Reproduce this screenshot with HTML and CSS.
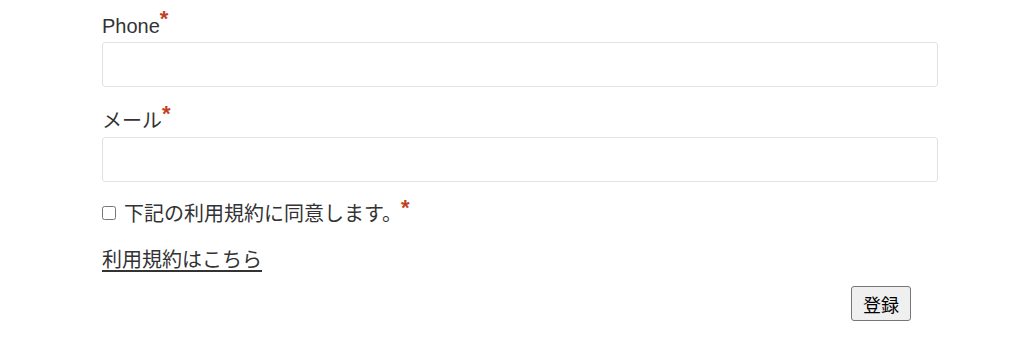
FILE: index.html
```html
<!DOCTYPE html>
<html lang="ja">
<head>
<meta charset="utf-8">
<link rel="stylesheet" href="styles.css">
</head>
<body>
<form class="form">
  <div class="field">
    <label class="label">Phone<span class="req">*</span></label>
    <input class="text-input" type="tel">
  </div>
  <div class="field">
    <label class="label">メール<span class="req">*</span></label>
    <input class="text-input" type="email">
  </div>
  <div class="agree">
    <input class="check" type="checkbox">
    <span class="agree-text">下記の利用規約に同意します。</span>
    <span class="req req-agree">*</span>
  </div>
  <div class="terms"><a class="terms-link" href="#">利用規約はこちら</a></div>
  <div class="actions"><button class="submit" type="button">登録</button></div>
</form>
</body>
</html>
```

FILE: styles.css
```css
* { box-sizing: border-box; }
html, body { margin: 0; padding: 0; background: #fff; }
body {
  font-family: "Liberation Sans", "Noto Sans CJK JP", sans-serif;
  color: #333;
  font-size: 20px;
}
.form {
  width: 836px;
  margin-left: 102px;
  padding-top: 11px;
}
.field {
  display: flex;
  flex-direction: column;
  margin-bottom: 19px;
}
.label {
  display: block;
  line-height: 30px;
  height: 30px;
  font-size: 20px;
}
.req {
  color: #c0421f;
  font-weight: bold;
  font-size: 22px;
  position: relative;
  top: -7px;
  margin-left: 0;
}
.text-input {
  display: block;
  width: 836px;
  height: 45px;
  margin-top: 1px;
  border: 1px solid #e2e2e2;
  border-radius: 3px;
  background: #fff;
  font: inherit;
  padding: 0 10px;
}
.agree {
  display: flex;
  align-items: center;
  height: 30px;
  margin-top: -2px;
}
.check {
  margin: -2px 8px 0 0;
  width: 14px;
  height: 14px;
}
.agree-text { line-height: 30px; }
.req-agree { margin-left: -1px; top: -6px; }
.terms {
  margin-top: 16px;
  line-height: 30px;
}
.terms-link {
  color: #333;
  text-decoration: underline;
  text-underline-offset: 3px;
}
.actions {
  display: flex;
  justify-content: flex-end;
  padding-right: 27px;
  margin-top: 11px;
}
.submit {
  width: 60px;
  height: 35px;
  font-family: "Noto Sans CJK JP", sans-serif;
  font-size: 18px;
  color: #000;
  background: #efefef;
  border: 1px solid #767676;
  border-radius: 3px;
  padding: 0;
}
```
